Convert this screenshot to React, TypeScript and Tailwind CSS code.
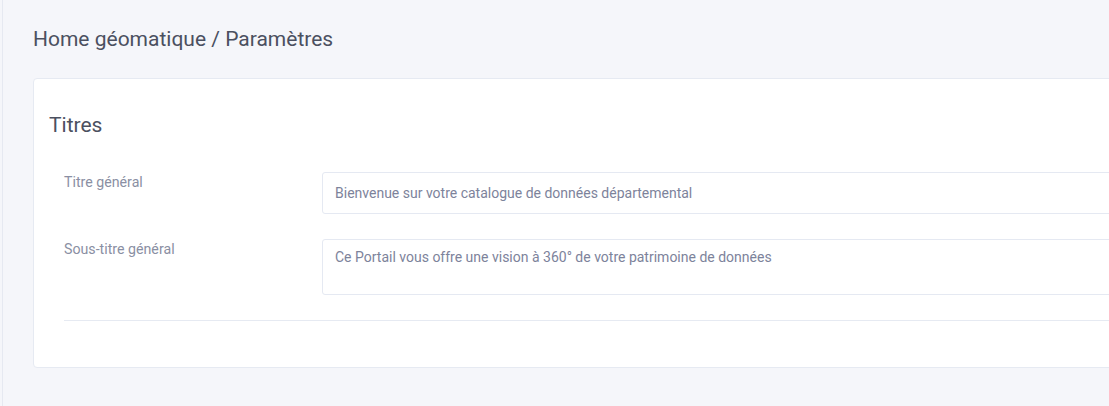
import React from "react";

const fields = [
  {
    label: "Titre général",
    value: "Bienvenue sur votre catalogue de données départemental",
    multiline: false,
  },
  {
    label: "Sous-titre général",
    value: "Ce Portail vous offre une vision à 360° de votre patrimoine de données",
    multiline: true,
  },
];

const App = () => {
  return (
    <div
      className="h-[406px] w-full overflow-hidden bg-[#f5f6fa] pl-[2px]"
      style={{ fontFamily: "Roboto, 'Liberation Sans', sans-serif" }}
    >
      <div className="h-full w-[1300px] border-l border-[#e6e9f1] pl-[30px]">
        <div className="pt-[27px] text-[21px] leading-[24px] text-[#4b5060]">
          Home géomatique / Paramètres
        </div>
        <div className="mt-[27px] rounded-[4px] border border-[#e6eaf2] bg-white pb-[46px] pl-[15px] pt-[34px]">
          <h2 className="text-[21px] leading-[24px] text-[#4b5060]">Titres</h2>
          <div className="mt-[35px] pl-[15px]">
            {fields.map((f, i) => (
              <div key={f.label} className={`flex ${i > 0 ? "mt-[25px]" : ""}`}>
                <label className="w-[258px] shrink-0 text-[14.2px] leading-[20px] text-[#8a8fa3]">
                  {f.label}
                </label>
                <div
                  className={`flex-1 rounded-[3px] border border-[#e5e9f2] px-[12px] text-[14px] text-[#7d839b] ${
                    f.multiline ? "h-[56px] pt-[7px] leading-[20px]" : "flex h-[42px] items-center"
                  }`}
                >
                  {f.value}
                </div>
              </div>
            ))}
            <div className="mt-[25px] border-t border-[#e6eaf2]" />
          </div>
        </div>
      </div>
    </div>
  );
};

export default App;
